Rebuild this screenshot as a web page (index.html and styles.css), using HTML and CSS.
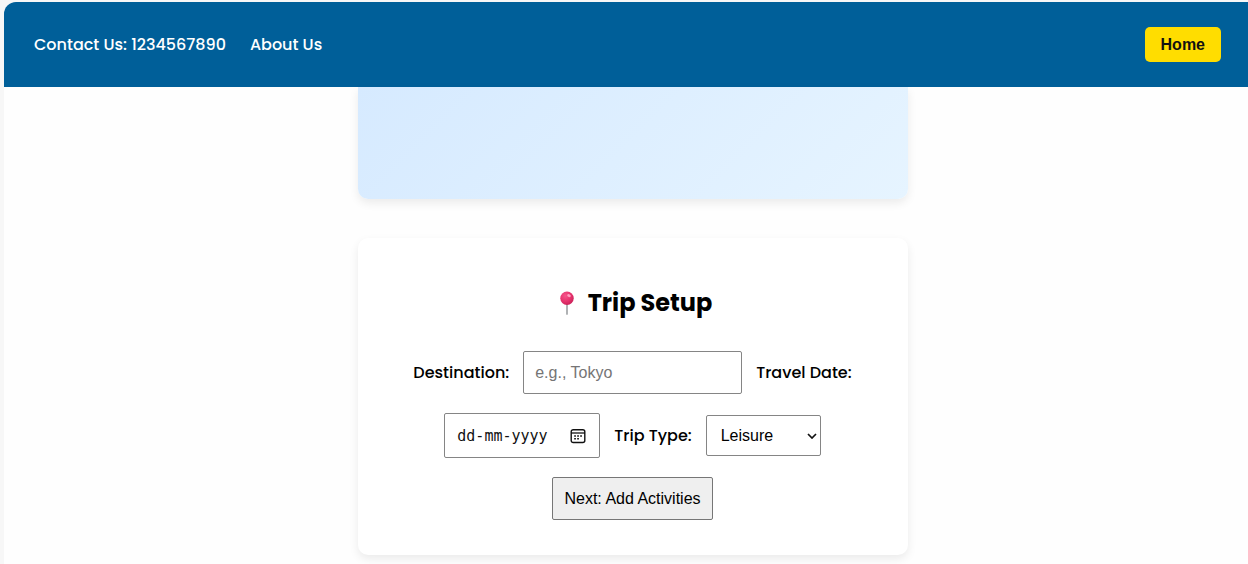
FILE: index.html
```html
<!DOCTYPE html>
<html lang="en">
<head>
<meta charset="utf-8">
<title>Trip Setup</title>
<link rel="stylesheet" href="styles.css">
</head>
<body>
<div class="page">
  <header class="site-header">
    <nav class="nav-links">
      <a href="#contact">Contact Us: 1234567890</a>
      <a href="#about">About Us</a>
    </nav>
    <a class="home-button" href="#home">Home</a>
  </header>
  <main class="content">
    <section class="banner" aria-hidden="true"></section>
    <section class="card">
      <h2 class="card-title">
        <svg class="pin" viewBox="0 0 16 24" aria-hidden="true">
          <defs>
            <radialGradient id="ball" cx="0.38" cy="0.32" r="0.7">
              <stop offset="0" stop-color="#f5558a"/>
              <stop offset="0.6" stop-color="#e6336d"/>
              <stop offset="1" stop-color="#cb225a"/>
            </radialGradient>
          </defs>
          <path d="M8 13v10.2" stroke="#85898c" stroke-width="1.3" stroke-linecap="round"/>
          <circle cx="8" cy="7.2" r="6.7" fill="url(#ball)"/>
          <ellipse cx="10" cy="4.6" rx="1.9" ry="1.4" fill="#ff9fc0" transform="rotate(30 10 4.6)"/>
        </svg>
        Trip Setup
      </h2>
      <form class="trip-form">
        <label for="destination">Destination:</label>
        <input class="field destination" id="destination" type="text" placeholder="e.g., Tokyo">
        <label for="date">Travel Date:</label>
        <div class="field date-field">
          <input class="date-input" id="date" type="text" placeholder="dd-mm-yyyy">
          <button class="date-button" type="button" aria-label="Open calendar">
            <svg class="calendar" viewBox="0 0 16 16" aria-hidden="true">
              <rect x="1.2" y="1.7" width="13.6" height="12.8" rx="2" fill="none" stroke="#111" stroke-width="1.4"/>
              <path d="M1.2 5h13.6" stroke="#111" stroke-width="1.3"/>
              <path d="M4.2 8h1.7M7.2 8h1.7M10.2 8h1.7M4.2 10.8h1.7M7.2 10.8h1.7" stroke="#111" stroke-width="1.6"/>
            </svg>
          </button>
        </div>
        <label for="type">Trip Type:</label>
        <div class="select-wrap">
          <select class="field trip-type" id="type">
            <option>Leisure</option>
            <option>Business</option>
            <option>Adventure</option>
          </select>
          <svg class="chevron" viewBox="0 0 10 6" aria-hidden="true"><path d="M1 1l4 4 4-4" fill="none" stroke="#111" stroke-width="1.7"/></svg>
        </div>
        <button class="next-button" type="button">Next: Add Activities</button>
      </form>
    </section>
  </main>
</div>
</body>
</html>
```
FILE: styles.css
```css
* { box-sizing: border-box; }
body {
  margin: 0;
  padding: 2px 0 0 4px;
  background: #f7f7f7;
  color: #000;
  font: 500 16px/24px Poppins, Inter, sans-serif;
}
.page {
  min-height: calc(100vh - 2px);
  border-radius: 12px 0 0 0;
  background: #fefefe;
  overflow: hidden;
}
.site-header {
  display: flex;
  align-items: center;
  justify-content: space-between;
  padding: 25px 27px 25px 30px;
  background: #005f99;
}
.nav-links { display: flex; gap: 24px; }
.nav-links a { color: #fff; text-decoration: none; }
.home-button {
  padding: 0 16px;
  border-radius: 5px;
  background: #ffdd00;
  color: #111;
  font: 700 16px/35px "Liberation Sans", Arial, sans-serif;
  text-decoration: none;
}
.content {
  display: flex;
  flex-direction: column;
  align-items: center;
  gap: 39px;
  padding: 0 0 6px 13px;
}
.banner, .card {
  width: 100%;
  max-width: 550px;
  box-shadow: 0 4px 10px rgba(0, 0, 0, 0.08);
}
.banner {
  height: 112px;
  border-radius: 0 0 10px 10px;
  background: linear-gradient(135deg, #d6eaff, #e6f4ff);
}
.card {
  padding: 47px 30px 35px;
  border-radius: 10px;
  background: #fff;
}
.card-title {
  display: flex;
  align-items: center;
  justify-content: center;
  gap: 13px;
  margin: 0 0 30px;
  padding-left: 6px;
  font-size: 24px;
  line-height: 36px;
  font-weight: 700;
}
.pin { width: 16px; height: 24px; }
.trip-form {
  display: flex;
  flex-wrap: wrap;
  align-items: center;
  justify-content: center;
  gap: 19px 14px;
}
.field {
  border: 1px solid #858585;
  border-radius: 2px;
  background: #fff;
  color: #000;
  font: 400 16px/20px "Liberation Sans", Arial, sans-serif;
}
.destination { width: 219px; height: 43px; padding: 0 11px; }
.destination::placeholder { color: #757575; }
.date-field {
  display: flex;
  align-items: center;
  justify-content: space-between;
  width: 156px;
  height: 45px;
  padding: 0 13px 0 12px;
}
.date-input {
  width: 100px;
  padding: 0;
  border: 0;
  background: none;
  font: 400 15px/20px "DejaVu Sans Mono", monospace;
}
.date-input::placeholder { color: #111; }
.date-button {
  display: flex;
  padding: 0;
  border: 0;
  background: none;
}
.calendar { width: 16px; height: 16px; }
.select-wrap { position: relative; }
.trip-type {
  display: block;
  width: 115px;
  height: 41px;
  padding: 0 14px;
  appearance: none;
}
.chevron {
  position: absolute;
  top: 18px;
  right: 4px;
  width: 10px;
  height: 6px;
  pointer-events: none;
}
.next-button {
  height: 43px;
  padding: 0 11px;
  border: 1px solid #767676;
  border-radius: 2px;
  background: #efefef;
  color: #000;
  font: 400 16px/20px "Liberation Sans", Arial, sans-serif;
}
```
